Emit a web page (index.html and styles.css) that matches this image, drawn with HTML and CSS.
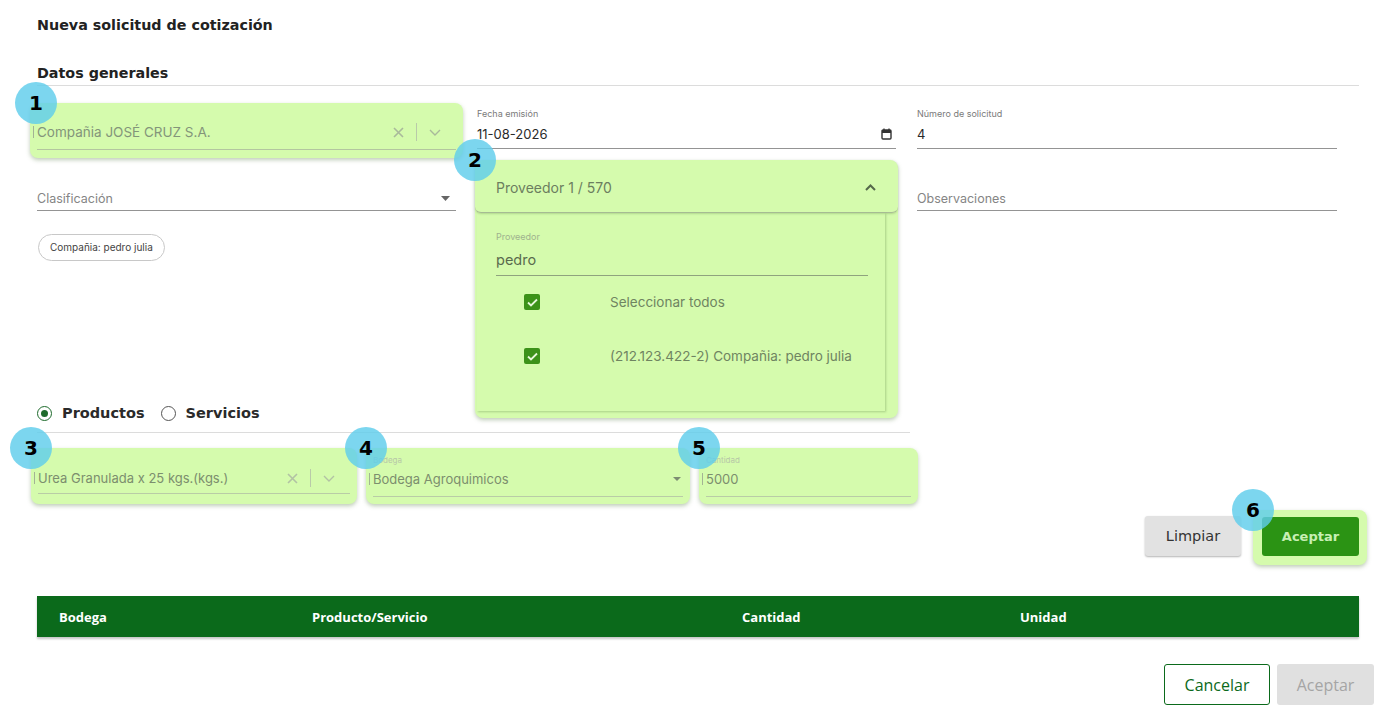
FILE: index.html
```html
<!DOCTYPE html>
<html lang="es">
<head>
    <meta charset="UTF-8">
    <meta name="viewport" content="width=device-width, initial-scale=1.0">
    <title>Nueva solicitud de cotización</title>
    <link rel="stylesheet" href="styles.css">
</head>
<body>
    <div class="page">
        <h1 class="page-title">Nueva solicitud de cotización</h1>
        <h2 class="section-title">Datos generales</h2>

        <div class="general-grid">
            <!-- compañia -->
            <div class="hl select-box">
                <span class="badge badge-one">1</span>
                <div class="select-line">
                    <span class="cursor-bar"></span>
                    <span class="select-value">Compañia JOSÉ CRUZ S.A.</span>
                    <span class="select-tools">
                        <svg class="tool-x" width="11" height="11" viewBox="0 0 11 11"><path d="M1 1L10 10M10 1L1 10" stroke="#a9b99b" stroke-width="1.6" fill="none"/></svg>
                        <span class="tool-divider"></span>
                        <svg class="tool-chevron" width="12" height="7" viewBox="0 0 12 7"><path d="M1 1L6 6L11 1" stroke="#a9b99b" stroke-width="1.4" fill="none"/></svg>
                    </span>
                </div>
            </div>

            <div class="field">
                <label class="field-label">Fecha emisión</label>
                <div class="field-row">
                    <span class="field-value">11-08-2026</span>
                    <svg width="11" height="12" viewBox="0 0 11 12"><rect x="1" y="2" width="9" height="9" rx="1" fill="none" stroke="#333" stroke-width="1.4"/><rect x="1" y="2" width="9" height="3" fill="#333"/><path d="M3 0.5V2.5M8 0.5V2.5" stroke="#333" stroke-width="1.3"/></svg>
                </div>
            </div>

            <div class="field">
                <label class="field-label">Número de solicitud</label>
                <div class="field-row">
                    <span class="field-value">4</span>
                </div>
            </div>

            <div class="col">
                <div class="field">
                    <label class="field-label"></label>
                    <div class="field-row">
                        <span class="field-placeholder">Clasificación</span>
                        <svg width="9" height="5" viewBox="0 0 9 5"><path d="M0 0H9L4.5 5Z" fill="#666"/></svg>
                    </div>
                </div>
                <div class="chip">Compañia: pedro julia</div>
            </div>

            <div class="col dropdown-host">
                <div class="hl provider-panel">
                    <span class="badge">2</span>
                    <div class="panel-header">
                        <span>Proveedor 1 / 570</span>
                        <svg width="11" height="7" viewBox="0 0 11 7"><path d="M1 6L5.5 1.5L10 6" stroke="#55684a" stroke-width="2" fill="none"/></svg>
                    </div>
                    <div class="panel-body">
                        <div class="panel-inner">
                            <div class="panel-label">Proveedor</div>
                            <div class="panel-search">pedro</div>
                            <div class="check-row">
                                <span class="check-cell"><span class="checkbox"><svg width="11" height="9" viewBox="0 0 11 9"><path d="M1 4.5L4 7.5L10 1.5" stroke="#e6f7d9" stroke-width="1.8" fill="none"/></svg></span></span>
                                <span class="check-text">Seleccionar todos</span>
                            </div>
                            <div class="check-row">
                                <span class="check-cell"><span class="checkbox"><svg width="11" height="9" viewBox="0 0 11 9"><path d="M1 4.5L4 7.5L10 1.5" stroke="#e6f7d9" stroke-width="1.8" fill="none"/></svg></span></span>
                                <span class="check-text">(212.123.422-2) Compañia: pedro julia</span>
                            </div>
                        </div>
                    </div>
                </div>
            </div>

            <div class="col">
                <div class="field">
                    <label class="field-label"></label>
                    <div class="field-row">
                        <span class="field-placeholder">Observaciones</span>
                    </div>
                </div>
            </div>
        </div>

        <div class="type-switch">
            <label class="radio"><span class="radio-dot checked"></span>Productos</label>
            <label class="radio"><span class="radio-dot"></span>Servicios</label>
        </div>

        <div class="item-grid">
            <div class="hl item-box">
                <span class="badge">3</span>
                <div class="select-line">
                    <span class="cursor-bar"></span>
                    <span class="select-value">Urea Granulada x 25 kgs.(kgs.)</span>
                    <span class="select-tools">
                        <svg class="tool-x" width="11" height="11" viewBox="0 0 11 11"><path d="M1 1L10 10M10 1L1 10" stroke="#b2c2a4" stroke-width="1.6" fill="none"/></svg>
                        <span class="tool-divider"></span>
                        <svg class="tool-chevron" width="12" height="7" viewBox="0 0 12 7"><path d="M1 1L6 6L11 1" stroke="#b2c2a4" stroke-width="1.4" fill="none"/></svg>
                    </span>
                </div>
            </div>
            <div class="hl item-box">
                <span class="badge">4</span>
                <div class="item-field">
                    <div class="item-label">Bodega</div>
                    <div class="item-row">
                        <span class="cursor-bar"></span>
                        <span class="item-value">Bodega Agroquimicos</span>
                        <svg width="8" height="4" viewBox="0 0 8 4"><path d="M0 0H8L4 4Z" fill="#7d8c72"/></svg>
                    </div>
                </div>
            </div>
            <div class="hl item-box">
                <span class="badge">5</span>
                <div class="item-field">
                    <div class="item-label">Cantidad</div>
                    <div class="item-row">
                        <span class="cursor-bar"></span>
                        <span class="item-value">5000</span>
                    </div>
                </div>
            </div>
        </div>

        <div class="item-actions">
            <button class="btn btn-light">Limpiar</button>
            <div class="hl btn-wrap">
                <span class="badge">6</span>
                <button class="btn btn-green">Aceptar</button>
            </div>
        </div>

        <div class="table-head">
            <span class="th th-bodega">Bodega</span>
            <span class="th th-producto">Producto/Servicio</span>
            <span class="th th-cantidad">Cantidad</span>
            <span class="th">Unidad</span>
        </div>

        <div class="footer-actions">
            <button class="btn-outline">Cancelar</button>
            <button class="btn-disabled">Aceptar</button>
        </div>
    </div>
</body>
</html>
```

FILE: styles.css
```css
body {
    margin: 0;
    padding: 0;
    font-family: Inter, "Open Sans", sans-serif;
    background-color: #fff;
    color: #222;
}

.page {
    padding: 15px 38px 0 37px;
}

.page-title,
.section-title {
    margin: 0;
    font-family: "DejaVu Sans", sans-serif;
    font-size: 14.3px;
    font-weight: 700;
    line-height: 20px;
    color: #222;
}

.section-title {
    margin-top: 28px;
    padding-bottom: 2px;
    border-bottom: 1px solid #dcdcdc;
}

/* green highlight */
.hl {
    position: relative;
    background-color: #d5fbad;
    border-radius: 8px;
    box-shadow: 0 2px 4px rgba(70, 110, 50, 0.35);
}

.badge {
    position: absolute;
    left: -21px;
    top: -21px;
    width: 42px;
    height: 42px;
    border-radius: 50%;
    background-color: rgba(95, 205, 235, 0.82);
    color: #000;
    font-family: "DejaVu Sans", sans-serif;
    font-weight: 700;
    font-size: 20px;
    line-height: 42px;
    text-align: center;
    z-index: 5;
}

.badge-one {
    left: -15px;
}

.general-grid {
    display: grid;
    grid-template-columns: 419px 419px 420px;
    column-gap: 21px;
    row-gap: 21px;
    margin-top: 22px;
    align-items: start;
}

.select-box {
    margin: -5px -7px -9px;
    padding: 0 7px 8px;
}

.select-line {
    display: flex;
    align-items: center;
    height: 34px;
    padding-top: 12px;
    border-bottom: 1px solid #b3c69f;
    position: relative;
}

.cursor-bar {
    width: 1px;
    height: 12px;
    background-color: #a3b394;
    margin-left: -4px;
    margin-right: 3px;
}

.select-value {
    flex-grow: 1;
    font-size: 13.5px;
    color: #83957a;
}

.select-tools {
    display: flex;
    align-items: center;
    gap: 12px;
    padding-right: 15px;
}

.tool-divider {
    width: 1px;
    height: 18px;
    background-color: #b9caa9;
}

.field {
    height: 40px;
    border-bottom: 1px solid #949494;
}

.field-label {
    display: block;
    height: 12px;
    font-size: 9px;
    line-height: 12px;
    color: #7a7a7a;
}

.field-row {
    display: flex;
    align-items: center;
    justify-content: space-between;
    height: 18px;
    margin-top: 5px;
    padding-right: 4px;
}

.field-value {
    font-size: 13px;
    color: #2a2a2a;
}

.field-placeholder {
    font-size: 12.5px;
    color: #858585;
    margin-top: 4px;
}

.col .field-row svg {
    margin-top: 4px;
    margin-right: 2px;
}

.chip {
    display: inline-block;
    margin-top: 23px;
    margin-left: 1px;
    padding: 0 11px;
    height: 25px;
    line-height: 25px;
    border: 1px solid #c8c8c8;
    border-radius: 14px;
    font-size: 10px;
    color: #444;
}

.dropdown-host {
    position: relative;
    height: 41px;
}

.provider-panel {
    position: absolute;
    left: -2px;
    right: -2px;
    top: -10px;
    height: 258px;
    z-index: 3;
}

.panel-header {
    display: flex;
    align-items: center;
    justify-content: space-between;
    height: 50px;
    padding: 2px 22px 0 21px;
    border-bottom: 1px solid #a9bd95;
    border-radius: 8px 8px 6px 6px;
    box-shadow: 0 1px 2px rgba(70, 110, 50, 0.25);
    font-size: 14px;
    color: #6c7e5f;
}

.panel-body {
    padding: 0 13px 8px 2px;
}

.panel-inner {
    height: 198px;
    box-sizing: border-box;
    padding: 18px 17px 0 19px;
    box-shadow: 1px 1px 2px rgba(70, 110, 50, 0.3);
}

.panel-label {
    font-size: 9px;
    line-height: 11px;
    color: #9fb28e;
}

.panel-search {
    margin-top: 8px;
    padding-bottom: 5px;
    line-height: 20px;
    font-size: 14.5px;
    color: #5a6b4e;
    border-bottom: 1px solid #8fa37e;
}

.check-row {
    display: flex;
    align-items: center;
    height: 56px;
    margin-bottom: -2px;
    position: relative;
    top: -2px;
}

.check-cell {
    width: 114px;
    display: flex;
    justify-content: center;
    padding-right: 42px;
    box-sizing: border-box;
}

.checkbox {
    display: flex;
    align-items: center;
    justify-content: center;
    width: 16px;
    height: 16px;
    border-radius: 2px;
    background-color: #3c9219;
}

.check-text {
    font-size: 13.5px;
    color: #6f8461;
}

.type-switch {
    display: flex;
    align-items: center;
    gap: 16px;
    width: 873px;
    margin-top: 142px;
    padding-bottom: 9px;
    border-bottom: 1px solid #dcdcdc;
}

.radio {
    display: flex;
    align-items: center;
    gap: 10px;
    height: 20px;
    font-family: "DejaVu Sans", sans-serif;
    font-size: 14.5px;
    font-weight: 700;
    color: #2a2a2a;
}

.radio-dot {
    width: 13px;
    height: 13px;
    border: 1.5px solid #555;
    border-radius: 50%;
    position: relative;
}

.radio-dot.checked {
    border-color: #1e6b2c;
}

.radio-dot.checked::after {
    content: "";
    position: absolute;
    left: 3px;
    top: 3px;
    width: 7px;
    height: 7px;
    border-radius: 50%;
    background-color: #1e6b2c;
}

.item-grid {
    display: grid;
    grid-template-columns: 326px 324px 219px;
    column-gap: 9px;
    margin-top: 15px;
    margin-left: -6px;
}

.item-box {
    height: 56px;
    padding: 0 7px;
}

.item-box .select-line {
    height: 30px;
    padding-top: 15px;
    border-bottom-color: #b9cca6;
}

.item-box .select-value {
    font-size: 13px;
    color: #7c8e6e;
}

.item-field {
    padding-top: 7px;
    height: 41px;
    border-bottom: 1px solid #b9cca6;
}

.item-label {
    font-size: 8px;
    line-height: 10px;
    color: #b7c7a8;
}

.item-row {
    display: flex;
    align-items: center;
    height: 20px;
    margin-top: 4px;
}

.item-value {
    flex-grow: 1;
    font-size: 13px;
    color: #7c8e6e;
}

.item-row svg {
    margin-right: 2px;
}

.item-actions {
    display: flex;
    justify-content: flex-end;
    align-items: flex-start;
    gap: 12px;
    margin-top: 6px;
    margin-right: -8px;
}

.btn {
    height: 40px;
    border: none;
    border-radius: 3px;
    font-family: "DejaVu Sans", sans-serif;
    font-size: 13px;
    cursor: pointer;
}

.btn-light {
    width: 96px;
    margin-top: 6px;
    font-size: 14.5px;
    background-color: #e2e2e2;
    color: #333;
    box-shadow: 0 1px 2px rgba(0, 0, 0, 0.3);
}

.btn-wrap {
    padding: 7px 8px 9px 9px;
}

.btn-green {
    display: block;
    width: 97px;
    height: 39px;
    font-weight: 700;
    background-color: #2b9314;
    color: #c8efb4;
}

.table-head {
    display: flex;
    align-items: center;
    height: 41px;
    margin-top: 31px;
    background-color: #0b6a1b;
    box-shadow: 0 2px 2px rgba(0, 0, 0, 0.22);
}

.th {
    font-family: "Open Sans", sans-serif;
    font-size: 13px;
    font-weight: 700;
    color: #fff;
}

.th-bodega {
    width: 253px;
    padding-left: 22px;
}

.th-producto {
    width: 430px;
}

.th-cantidad {
    width: 278px;
}

.footer-actions {
    display: flex;
    justify-content: flex-end;
    gap: 7px;
    margin-top: 27px;
    margin-right: -15px;
}

.btn-outline,
.btn-disabled {
    height: 41px;
    border-radius: 3px;
    font-family: "Open Sans", sans-serif;
    font-size: 16px;
}

.btn-outline {
    width: 106px;
    background-color: #fff;
    border: 1px solid #0b6a1b;
    color: #0b6a1b;
}

.btn-disabled {
    width: 97px;
    border: none;
    background-color: #e0e0e0;
    color: #a5a5a5;
}
```
